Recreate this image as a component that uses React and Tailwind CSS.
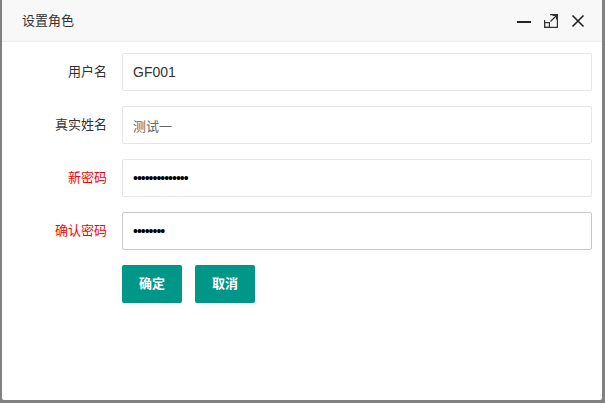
import React from "react"

const font = { fontFamily: '"Liberation Sans", "Noto Sans CJK SC", sans-serif' }

const Row = ({ label, red, children }) => (
  <div className="flex items-center mb-[15px]">
    <label className={`w-[105px] shrink-0 text-right text-[13px] ${red ? "text-[#ff0000]" : "text-[#333]"}`}>
      {label}
    </label>
    <div className="ml-[15px] flex-1">{children}</div>
  </div>
)

export default function App() {
  return (
    <div className="w-[605px] h-[403px] bg-[#818181] pl-[2px] pr-[3px] pb-[3px]" style={font}>
      <div className="h-[400px] bg-white rounded-b-[2px] flex flex-col overflow-hidden">
        <div className="h-[42px] shrink-0 bg-[#f8f8f8] border-b border-[#eee] flex items-center pl-[20px] pr-[17px]">
          <span className="text-[13px] text-[#333] flex-1">设置角色</span>
          <div className="flex items-center gap-[13px]">
            <svg width="14" height="14" viewBox="0 0 14 14">
              <path d="M0 8h14" stroke="#222" strokeWidth="2" />
            </svg>
            <svg width="14" height="14" viewBox="0 0 14 14" fill="none" stroke="#333" strokeWidth="1.2">
              <path d="M6 0.6H13.4V13.4H0.6V6" />
              <rect x="0.6" y="8.6" width="4.8" height="4.8" />
              <path d="M6.5 7.5L12.5 1.5M8.5 1.5h4v4" />
            </svg>
            <svg width="14" height="14" viewBox="0 0 14 14" fill="none" stroke="#222" strokeWidth="1.6">
              <path d="M1.5 1.5l11 11M12.5 1.5l-11 11" />
            </svg>
          </div>
        </div>
        <div className="pt-[11px] pr-[10px]">
          <Row label="用户名">
            <input
              className="w-full h-[38px] border border-[#e6e6e6] rounded-[2px] pl-[10px] text-[14px] text-[#333] outline-none"
              defaultValue="GF001"
              style={font}
            />
          </Row>
          <Row label="真实姓名">
            <input
              className="w-full h-[38px] border border-[#e6e6e6] rounded-[2px] pl-[10px] text-[13px] text-[#666] outline-none"
              defaultValue="测试一"
              style={font}
            />
          </Row>
          <Row label="新密码" red>
            <input
              type="password"
              className="w-full h-[38px] border border-[#e6e6e6] rounded-[2px] pl-[10px] text-[14px] text-black tracking-[-1px] outline-none"
              defaultValue="12345678901234"
            />
          </Row>
          <Row label="确认密码" red>
            <input
              type="password"
              className="w-full h-[38px] border border-[#c9c9c9] rounded-[2px] pl-[10px] text-[14px] text-black tracking-[-1px] outline-none"
              defaultValue="12345678"
            />
          </Row>
          <div className="flex gap-[13px] pl-[120px]">
            <button className="w-[60px] h-[38px] bg-[#009688] text-white text-[13px] font-bold rounded-[2px]">确定</button>
            <button className="w-[60px] h-[38px] bg-[#009688] text-white text-[13px] font-bold rounded-[2px]">取消</button>
          </div>
        </div>
      </div>
    </div>
  )
}
